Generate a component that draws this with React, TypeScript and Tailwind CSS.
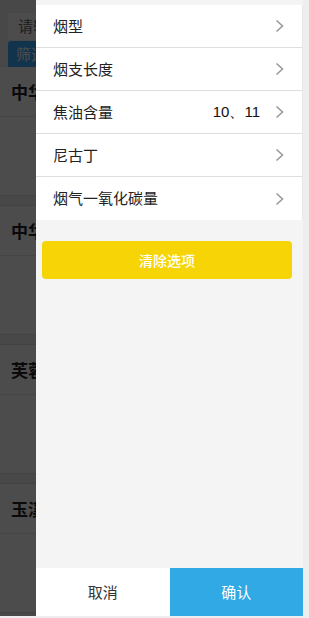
import React from "react";

type FilterRow = {
  label: string;
  value?: string;
};

const filters: FilterRow[] = [
  { label: "烟型" },
  { label: "烟支长度" },
  { label: "焦油含量", value: "10、11" },
  { label: "尼古丁" },
  { label: "烟气一氧化碳量" },
];

const products = ["中华(硬)", "中华(软)", "芙蓉王(硬)", "玉溪(软)"];

const fontStack = "font-['Noto_Sans_CJK_SC','Noto_Sans',sans-serif]";

const Chevron = () => (
  <svg width="11" height="14" viewBox="0 0 11 14" fill="none" stroke="#9a9a9a" strokeWidth="1.6">
    <polyline points="2.5,1.5 8.5,7 2.5,12.5" />
  </svg>
);

const ProductPage = () => (
  <div className="w-full">
    <div className="h-[67px] px-[8px] pt-[13px] border-b border-[#e6e6e6] bg-[#f2f2f2]">
      <div className="h-[27px] bg-white flex items-center pl-[10px] text-[15px] text-[#666]">
        请输入
      </div>
      <div className="mt-[1px] h-[26px] w-[60px] rounded-t-[3px] bg-[#3aabff] flex items-center pl-[8px] text-[15px] text-white">
        筛选
      </div>
    </div>
    {products.map((name) => (
      <div key={name}>
        <div className="h-[50px] border-b border-[#e6e6e6] flex items-center pl-[11px] text-[17px] font-bold text-[#222]">
          {name}
        </div>
        <div className="h-[78px]" />
        <div className="h-[11px] bg-[#f0f0f0] border-y border-[#e2e2e2]" />
      </div>
    ))}
  </div>
);

const FilterDrawer = () => (
  <aside className="absolute top-0 right-0 bottom-0 w-[267px] bg-[#f4f4f4] flex flex-col pt-[5px]">
    <ul className="bg-white border-r border-[#e8e8e8]">
      {filters.map((f, i) => (
        <li
          key={f.label}
          className={`h-[43px] flex items-center pl-[17px] pr-[17px] text-[15px] text-[#222] ${
            i < filters.length - 1 ? "border-b border-[#dedede]" : ""
          }`}
        >
          <span className="flex-1">{f.label}</span>
          {f.value && <span className="mr-[14px] font-['Liberation_Sans',sans-serif] text-[#111]">{f.value}</span>}
          <Chevron />
        </li>
      ))}
    </ul>
    <button className="mt-[21px] ml-[6px] w-[250px] h-[38px] rounded-[4px] bg-[#f7d406] text-white text-[14px] font-medium">
      清除选项
    </button>
    <div className="mt-auto flex h-[48px] text-[15px]">
      <button className="flex-1 bg-white text-[#333]">取消</button>
      <button className="flex-1 bg-[#30a9e4] text-white">确认</button>
    </div>
  </aside>
);

export default function App() {
  return (
    <div className={`w-[309px] h-[618px] bg-[#eeeeee] ${fontStack}`}>
      <div className="relative w-[303px] h-[616px] overflow-hidden bg-white">
        <ProductPage />
        <div className="absolute inset-0 bg-black/70" />
        <FilterDrawer />
      </div>
    </div>
  );
}
